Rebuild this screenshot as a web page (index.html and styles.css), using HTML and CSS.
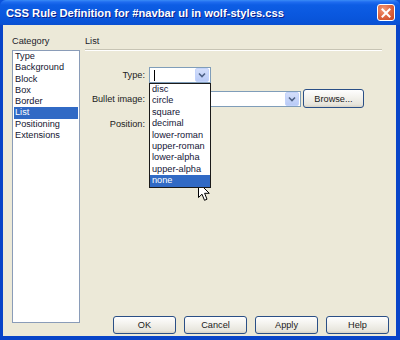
FILE: index.html
```html
<!DOCTYPE html>
<html>
<head>
<meta charset="utf-8">
<link rel="stylesheet" href="styles.css">
</head>
<body>
<div class="window">
  <div class="titlebar">
    <span class="title">CSS Rule Definition for #navbar ul in wolf-styles.css</span>
    <span class="close"><svg width="10" height="10" viewBox="0 0 10 10"><path d="M1.5 1.5 L8.5 8.5 M8.5 1.5 L1.5 8.5" stroke="#fff" stroke-width="2" stroke-linecap="square"/></svg></span>
  </div>
  <div class="client">
    <div class="cat-col">
      <div class="hdr">Category</div>
      <ul class="listbox">
        <li>Type</li>
        <li>Background</li>
        <li>Block</li>
        <li>Box</li>
        <li>Border</li>
        <li class="sel">List</li>
        <li>Positioning</li>
        <li>Extensions</li>
      </ul>
    </div>
    <div class="panel">
      <div class="hdr">List</div>
      <div class="divider"></div>
      <div class="form">
        <div class="row r1">
          <span class="lbl">Type:</span>
          <div class="select type">
            <span class="caret"></span>
            <span class="arrow"><svg width="8" height="6" viewBox="0 0 8 6"><path d="M1 1.5 L4 4.5 L7 1.5" fill="none" stroke="#4d6185" stroke-width="1.6"/></svg></span>
            <ul class="dropdown">
              <li>disc</li>
              <li>circle</li>
              <li>square</li>
              <li>decimal</li>
              <li>lower-roman</li>
              <li>upper-roman</li>
              <li>lower-alpha</li>
              <li>upper-alpha</li>
              <li class="sel">none</li>
            </ul>
          </div>
        </div>
        <div class="row r2">
          <span class="lbl">Bullet image:</span>
          <div class="select bullet">
            <span class="caret none"></span>
            <span class="arrow"><svg width="8" height="6" viewBox="0 0 8 6"><path d="M1 1.5 L4 4.5 L7 1.5" fill="none" stroke="#4d6185" stroke-width="1.6"/></svg></span>
          </div>
          <span class="btn browse">Browse...</span>
        </div>
        <div class="row r3">
          <span class="lbl">Position:</span>
          <div class="select position">
            <span class="caret none"></span>
            <span class="arrow"></span>
          </div>
        </div>
      </div>
      <div class="buttons">
        <span class="btn">OK</span>
        <span class="btn">Cancel</span>
        <span class="btn">Apply</span>
        <span class="btn">Help</span>
      </div>
    </div>
  </div>
  <svg class="cursor" width="13" height="20" viewBox="0 0 13 20"><path d="M0.5 0.5 L0.5 15.5 L4 12.2 L6.5 18.3 L9 17.2 L6.6 11.3 L11.3 11.3 Z" fill="#fff" stroke="#000" stroke-width="1" stroke-linejoin="miter"/></svg>
</div>
</body>
</html>
```
FILE: styles.css
```css
* { box-sizing: border-box; }
html, body { margin: 0; padding: 0; }
body {
  width: 400px;
  height: 340px;
  overflow: hidden;
  font-family: "Liberation Sans", Arial, sans-serif;
  font-size: 9.2px;
  color: #1b1b2b;
}
ul { list-style: none; margin: 0; padding: 0; }

.window {
  position: relative;
  width: 400px;
  height: 340px;
  display: flex;
  flex-direction: column;
  background: #0a52dc;
}

.titlebar {
  height: 25px;
  flex: none;
  display: flex;
  align-items: center;
  justify-content: space-between;
  padding: 0 5px 0 6px;
  background: linear-gradient(#3a8cf6 0px, #1f6cf0 2px, #0d5de4 5px, #0a58df 14px, #0853d8 22px, #0a4fd0 25px);
  border-radius: 6px 6px 0 0;
}
.title {
  color: #fff;
  font-weight: bold;
  font-size: 11.2px;
  text-shadow: 1px 1px 0 #0a1f8c;
  margin-top: 1px;
}
.close {
  width: 18px;
  height: 17px;
  border: 1px solid #fff;
  border-radius: 3px;
  background: radial-gradient(circle at 35% 30%, #f29a78 0%, #e06a45 45%, #c8441f 100%);
  display: flex;
  align-items: center;
  justify-content: center;
}

.client {
  flex: 1;
  display: flex;
  background: #ece9d8;
  border-left: 3px solid #0844c8;
  border-right: 4px solid #0844c8;
  border-bottom: 4px solid #0844c8;
  padding: 10px 7px 2px 9px;
}

.hdr {
  height: 12px;
  line-height: 12px;
}

.cat-col {
  width: 68px;
  display: flex;
  flex-direction: column;
  padding-bottom: 11px;
}
.listbox {
  flex: 1;
  margin-top: 3px;
  background: #fff;
  border: 1px solid #8a9cb8;
  padding-top: 0;
}
.listbox li {
  height: 11.3px;
  line-height: 11.3px;
  padding-left: 2px;
  color: #151530;
}
.listbox li.sel {
  background: #316ac5;
  color: #fff;
  margin: 0 1px;
  padding-left: 1px;
}

.panel {
  flex: 1;
  margin-left: 5px;
  display: flex;
  flex-direction: column;
}
.divider {
  height: 2px;
  margin: 2px 7px 0 0;
  border-top: 1px solid #c7c4b4;
  border-bottom: 1px solid #fff;
}

.form {
  margin-top: 16px;
  display: flex;
  flex-direction: column;
}
.row {
  display: flex;
  align-items: center;
}
.r1 { height: 16px; }
.r2 { height: 19px; margin-top: 6px; }
.r3 { height: 16px; margin-top: 8px; }
.lbl {
  width: 60px;
  text-align: right;
  margin-right: 4px;
  color: #222;
}

.select {
  position: relative;
  height: 16px;
  background: #fff;
  border: 1px solid #7f9db9;
  display: flex;
  align-items: center;
  justify-content: space-between;
  padding: 0 1px 0 4px;
}
.select.type { width: 62px; z-index: 2; }
.select.bullet { width: 152px; }
.select.position { width: 62px; }
.caret {
  width: 1px;
  height: 11px;
  background: #000;
}
.caret.none { background: transparent; }
.arrow {
  width: 14px;
  height: 14px;
  border-radius: 2px;
  background: linear-gradient(#d3defa, #b9cbf7);
  border: 1px solid #c3d3fb;
  display: flex;
  align-items: center;
  justify-content: center;
}

.dropdown {
  position: absolute;
  left: -1px;
  top: 15px;
  width: 62px;
  background: #fff;
  border: 1px solid #1a1a1a;
}
.dropdown li {
  height: 11.4px;
  line-height: 11.4px;
  padding-left: 2px;
  color: #141436;
  white-space: nowrap;
}
.dropdown li.sel {
  background: #316ac5;
  color: #fff;
}

.btn {
  display: flex;
  align-items: center;
  justify-content: center;
  border: 1px solid #2a4f86;
  border-radius: 3px;
  background: linear-gradient(#fefefe 0%, #f4f3ee 40%, #e7e5dc 85%, #d8d3c6 100%);
  color: #1a1a1a;
}
.browse {
  width: 61px;
  height: 19px;
  margin-left: 2px;
}

.buttons {
  margin-top: auto;
  display: flex;
  justify-content: flex-end;
  gap: 8px;
}
.buttons .btn {
  width: 63px;
  height: 18px;
}

.cursor {
  position: absolute;
  left: 198px;
  top: 182px;
}
```
